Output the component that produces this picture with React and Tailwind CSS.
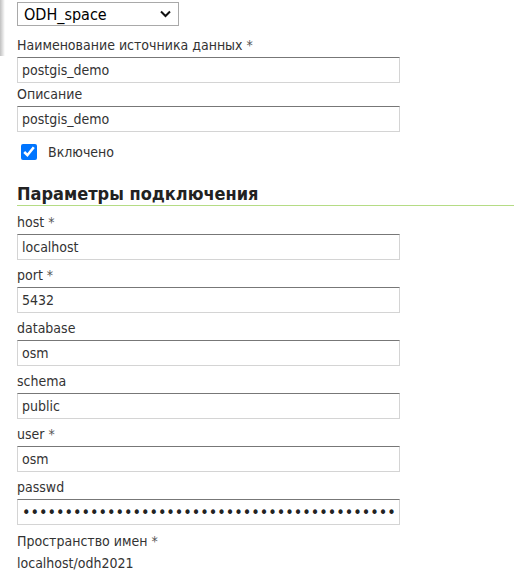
import React, { useState } from "react";

const inputCls =
  "block w-[383px] h-[26px] px-[4px] text-[14px] text-[#333] bg-white border border-[#d4d4d4] border-t-[#777] outline-none";

function Field({ label, required, value, type = "text", first }) {
  const [val, setVal] = useState(value);
  return (
    <div className={first ? "mt-[6px]" : "mt-[5px]"}>
      <label className="block leading-[20px] mb-[2px] text-[#333]">
        {label}
        {required && <span className="text-[#555]"> *</span>}
      </label>
      <input
        type={type}
        value={val}
        onChange={(e) => setVal(e.target.value)}
        className={type === "password" ? inputCls + " !text-[16px] !text-[#222]" : inputCls}
      />
    </div>
  );
}

export default function App() {
  const [enabled, setEnabled] = useState(true);

  return (
    <div className="relative min-h-screen bg-white pl-[17px] pt-[2px] text-[14px] text-[#333] font-['DejaVu_Sans_Condensed','DejaVu_Sans',sans-serif]">
      {/* shadow of the side panel */}
      <div className="absolute left-0 top-0 w-[5px] h-[56px] bg-gradient-to-r from-black/25 to-transparent" />

      <div className="relative w-[162px] h-[24px]">
        <select className="appearance-none w-full h-full pl-[6px] border border-[#a9a9a9] bg-white text-[16px] text-black outline-none">
          <option>ODH_space</option>
        </select>
        {/* chevron */}
        <svg
          className="absolute right-[8px] top-[8px] pointer-events-none"
          width="11"
          height="8"
          viewBox="0 0 11 8"
        >
          <path d="M1 1.5l4.5 4.5 4.5-4.5" fill="none" stroke="#111" strokeWidth="2" />
        </svg>
      </div>

      <div className="mt-[9px]">
        <label className="block leading-[20px] mb-[2px]">
          Наименование источника данных<span className="text-[#555]"> *</span>
        </label>
        <input defaultValue="postgis_demo" className={inputCls} />
      </div>
      <div className="mt-[1px]">
        <label className="block leading-[20px] mb-[2px]">Описание</label>
        <input defaultValue="postgis_demo" className={inputCls} />
      </div>

      <label className="mt-[10px] flex items-center h-[20px] pl-[4px] gap-[11px]">
        <input
          type="checkbox"
          checked={enabled}
          onChange={(e) => setEnabled(e.target.checked)}
          className="w-[16px] h-[16px] m-0 accent-[#0075ff]"
        />
        <span>Включено</span>
      </label>

      <h2 className="mt-[21px] font-bold text-[18px] leading-[22px] text-[#222]">
        Параметры подключения
      </h2>
      <div className="h-[1px] bg-[#b5dc85]" />

      <Field label="host" required value="localhost" first />
      <Field label="port" required value="5432" />
      <Field label="database" value="osm" />
      <Field label="schema" value="public" />
      <Field label="user" required value="osm" />
      <Field
        label="passwd"
        type="password"
        value="osmpassword1234567890abcdefghijklmnopqrstuvwxyz0123456789"
      />

      <div className="mt-[6px] leading-[20px]">
        Пространство имен<span className="text-[#555]"> *</span>
      </div>
      <div className="mt-[2px] leading-[20px]">localhost/odh2021</div>
    </div>
  );
}
